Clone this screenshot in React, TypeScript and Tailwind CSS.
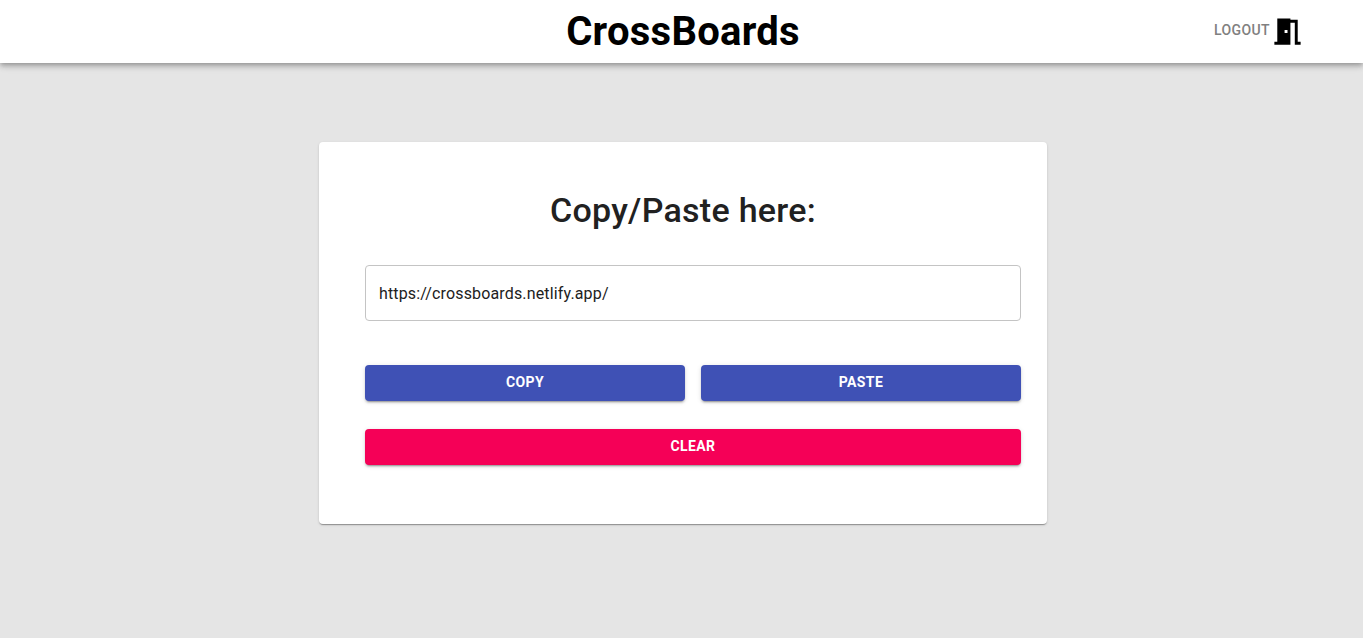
export default function App() {
  const btn = "h-9 pb-[2px] rounded text-white text-sm font-bold tracking-[0.4px] uppercase flex items-center justify-center shadow-[0_3px_1px_-2px_rgba(0,0,0,0.2),0_2px_2px_0_rgba(0,0,0,0.14),0_1px_5px_0_rgba(0,0,0,0.12)]";
  return (
    <div className="min-h-[638px] bg-[#e5e5e5] font-['Roboto',sans-serif]">
      <header className="relative h-[63px] bg-white flex items-center justify-center shadow-[0_2px_4px_-1px_rgba(0,0,0,0.2),0_4px_5px_0_rgba(0,0,0,0.14),0_1px_10px_0_rgba(0,0,0,0.12)]">
        <h1 className="ml-[3px] text-[40px] leading-[63px] font-bold tracking-[0.27px] text-black">CrossBoards</h1>
        <div className="absolute left-[1214px] top-[12px] flex items-center h-9">
          <span className="text-sm font-medium tracking-[0.4px] text-[#808080] w-[56px]">LOGOUT</span>
          <svg viewBox="0 0 24 24" className="w-[35px] h-[35px] mt-[3px] fill-black">
            <path d="M14 6v15H3v-2h2V3h9v1h5v15h2v2h-4V6h-3zm-4 5v2h2v-2h-2z" />
          </svg>
        </div>
      </header>
      <main className="flex justify-center pt-[79px] pl-[3px]">
        <section className="w-[728px] h-[382px] bg-white rounded flex flex-col shadow-[0_2px_1px_-1px_rgba(0,0,0,0.2),0_1px_1px_0_rgba(0,0,0,0.14),0_1px_3px_0_rgba(0,0,0,0.12)]">
          <h2 className="mt-[48px] text-center text-[34px] leading-[40px] font-medium tracking-[0.28px] text-[#212121]">Copy/Paste here:</h2>
          <div className="ml-[46px] w-[656px] flex flex-col">
            <div className="mt-[35px] h-14 border border-[#c4c4c4] rounded flex items-center px-[13px] pt-px text-base tracking-[0.15px] text-[#212121]">
              https://crossboards.netlify.app/
            </div>
            <div className="mt-[44px] flex gap-4">
              <button className={`flex-1 bg-[#3f51b5] ${btn}`}>Copy</button>
              <button className={`flex-1 bg-[#3f51b5] ${btn}`}>Paste</button>
            </div>
            <button className={`mt-7 bg-[#f50057] ${btn}`}>Clear</button>
          </div>
        </section>
      </main>
    </div>
  );
}
